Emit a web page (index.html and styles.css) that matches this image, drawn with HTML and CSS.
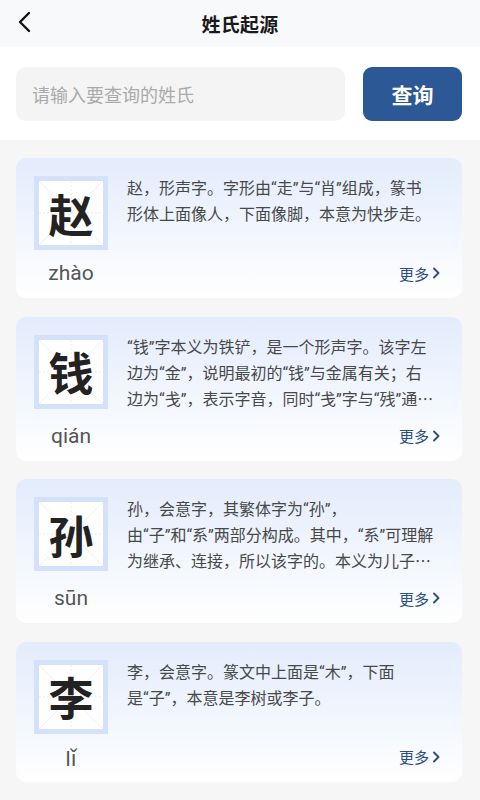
FILE: index.html
```html
<!DOCTYPE html>
<html lang="zh">
<head>
<meta charset="utf-8">
<title>姓氏起源</title>
<link rel="stylesheet" href="styles.css">
</head>
<body>
<div class="page">
  <header class="topbar">
    <svg class="back" width="14" height="22" viewBox="0 0 14 22"><path d="M11 2 L2 11 L11 20" fill="none" stroke="#111" stroke-width="2.4" stroke-linecap="round" stroke-linejoin="round"/></svg>
    <h1 class="title">姓氏起源</h1>
  </header>
  <section class="search">
    <div class="search-input">请输入要查询的姓氏</div>
    <div class="search-btn">查询</div>
  </section>
  <main class="list">
    <article class="card">
      <div class="card-top">
        <div class="char-box">
          <svg class="grid" viewBox="0 0 64 64" preserveAspectRatio="none"><path d="M0 0 L64 64 M64 0 L0 64" stroke="#ececec" stroke-width="0.8" fill="none"/><path d="M32 0 V64 M0 32 H64" stroke="#e6e6e6" stroke-width="0.8" stroke-dasharray="2 2" fill="none"/></svg>
          <span class="char">赵</span>
        </div>
        <p class="desc">赵，形声字。字形由“走”与“肖”组成，篆书<br>形体上面像人，下面像脚，本意为快步走。</p>
      </div>
      <div class="card-bottom">
        <span class="pinyin">zhào</span>
        <span class="more">更多<svg width="8" height="12" viewBox="0 0 8 12"><path d="M2 1.5 L6.5 6 L2 10.5" fill="none" stroke="#2b4f82" stroke-width="1.9" stroke-linecap="round" stroke-linejoin="round"/></svg></span>
      </div>
    </article>
    <article class="card">
      <div class="card-top">
        <div class="char-box">
          <svg class="grid" viewBox="0 0 64 64" preserveAspectRatio="none"><path d="M0 0 L64 64 M64 0 L0 64" stroke="#ececec" stroke-width="0.8" fill="none"/><path d="M32 0 V64 M0 32 H64" stroke="#e6e6e6" stroke-width="0.8" stroke-dasharray="2 2" fill="none"/></svg>
          <span class="char">钱</span>
        </div>
        <p class="desc">“钱”字本义为铁铲，是一个形声字。该字左<br>边为“金”，说明最初的“钱”与金属有关；右<br>边为“戋”，表示字音，同时“戋”字与“残”通<span class="ell">⋯</span></p>
      </div>
      <div class="card-bottom">
        <span class="pinyin">qián</span>
        <span class="more">更多<svg width="8" height="12" viewBox="0 0 8 12"><path d="M2 1.5 L6.5 6 L2 10.5" fill="none" stroke="#2b4f82" stroke-width="1.9" stroke-linecap="round" stroke-linejoin="round"/></svg></span>
      </div>
    </article>
    <article class="card">
      <div class="card-top">
        <div class="char-box">
          <svg class="grid" viewBox="0 0 64 64" preserveAspectRatio="none"><path d="M0 0 L64 64 M64 0 L0 64" stroke="#ececec" stroke-width="0.8" fill="none"/><path d="M32 0 V64 M0 32 H64" stroke="#e6e6e6" stroke-width="0.8" stroke-dasharray="2 2" fill="none"/></svg>
          <span class="char">孙</span>
        </div>
        <p class="desc">孙，会意字，其繁体字为“孙”，<br>由“子”和“系”两部分构成。其中，“系”可理解<br>为继承、连接，所以该字的。本义为儿子<span class="ell">⋯</span></p>
      </div>
      <div class="card-bottom">
        <span class="pinyin">sūn</span>
        <span class="more">更多<svg width="8" height="12" viewBox="0 0 8 12"><path d="M2 1.5 L6.5 6 L2 10.5" fill="none" stroke="#2b4f82" stroke-width="1.9" stroke-linecap="round" stroke-linejoin="round"/></svg></span>
      </div>
    </article>
    <article class="card">
      <div class="card-top">
        <div class="char-box">
          <svg class="grid" viewBox="0 0 64 64" preserveAspectRatio="none"><path d="M0 0 L64 64 M64 0 L0 64" stroke="#ececec" stroke-width="0.8" fill="none"/><path d="M32 0 V64 M0 32 H64" stroke="#e6e6e6" stroke-width="0.8" stroke-dasharray="2 2" fill="none"/></svg>
          <span class="char">李</span>
        </div>
        <p class="desc">李，会意字。篆文中上面是“木”，下面<br>是“子”，本意是李树或李子。</p>
      </div>
      <div class="card-bottom">
        <span class="pinyin">lǐ</span>
        <span class="more">更多<svg width="8" height="12" viewBox="0 0 8 12"><path d="M2 1.5 L6.5 6 L2 10.5" fill="none" stroke="#2b4f82" stroke-width="1.9" stroke-linecap="round" stroke-linejoin="round"/></svg></span>
      </div>
    </article>
  </main>
</div>
</body>
</html>
```
FILE: styles.css
```css
* { box-sizing: border-box; }
html, body { margin: 0; padding: 0; }
body {
  width: 480px;
  height: 800px;
  overflow: hidden;
  background: #f6f6f7;
  font-family: Roboto, "Noto Sans CJK SC", sans-serif;
  color: #333;
}
.page { display: flex; flex-direction: column; }
.topbar {
  height: 47px;
  background: #f8f9fb;
  display: flex;
  align-items: center;
  justify-content: center;
  position: relative;
}
.back { position: absolute; left: 18px; top: 11px; }
.title {
  margin: 0;
  font-size: 19px;
  font-weight: 700;
  color: #1a1a1a;
  letter-spacing: 0.3px;
}
.search {
  background: #fff;
  height: 93px;
  padding: 20px 18px 0 16px;
  display: flex;
  gap: 18px;
}
.search-input {
  flex: 1;
  height: 54px;
  border-radius: 10px;
  background: #f4f4f4;
  color: #aaa;
  font-size: 18px;
  display: flex;
  align-items: center;
  padding-left: 16px;
}
.search-btn {
  width: 99px;
  height: 54px;
  border-radius: 9px;
  background: #2c5996;
  color: #fff;
  font-size: 21px;
  font-weight: 700;
  display: flex;
  align-items: center;
  justify-content: center;
}
.list {
  padding: 18px 18px 0 16px;
  display: flex;
  flex-direction: column;
  gap: 18.5px;
}
.card {
  border-radius: 10px;
  background: linear-gradient(180deg, #e3ecfc 0%, #f2f6fe 55%, #ffffff 100%);
  padding: 18px 22px 12px 18px;
}
.card-top { display: flex; align-items: flex-start; }
.char-box {
  position: relative;
  flex: none;
  width: 74px;
  height: 74px;
  border: 5px solid #d3e2fa;
  background: #fff;
  display: flex;
  align-items: center;
  justify-content: center;
}
.grid { position: absolute; inset: 0; width: 100%; height: 100%; }
.char {
  position: relative;
  font-family: "Noto Sans CJK SC", sans-serif;
  font-size: 45px;
  font-weight: 700;
  color: #222;
  line-height: 1;
}
.desc {
  margin: 0 0 0 19px;
  font-size: 16px;
  line-height: 26px;
  height: auto;
  color: #484848;
  width: 318px;
  white-space: nowrap;
}
.ell { font-family: "Noto Sans CJK SC", sans-serif; line-height: 0; }
.card-bottom {
  display: flex;
  justify-content: space-between;
  align-items: center;
  margin-top: 10px;
  height: 26px;
}
.pinyin {
  width: 74px;
  text-align: center;
  font-size: 21px;
  color: #555;
}
.more {
  display: flex;
  align-items: center;
  gap: 3px;
  font-size: 15px;
  color: #2b4f82;
}
```
